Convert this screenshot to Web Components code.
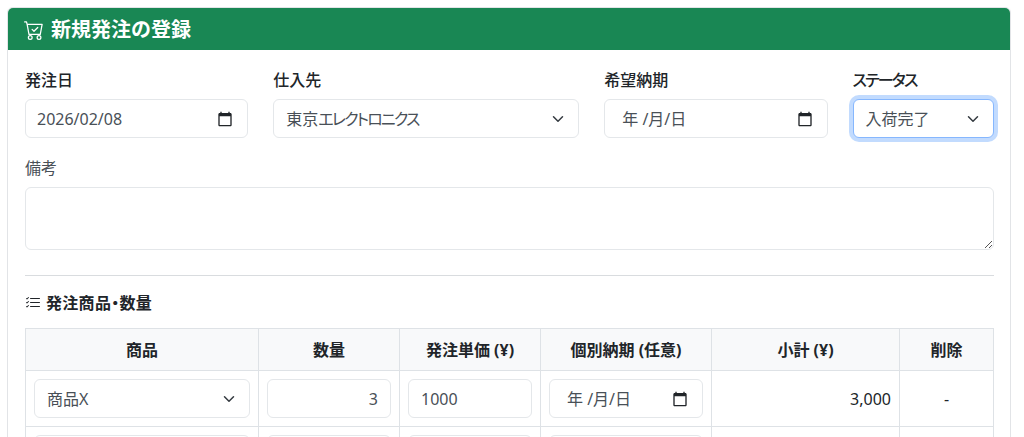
<!DOCTYPE html>
<html lang="ja">
<head>
<meta charset="utf-8">
<title>新規発注の登録</title>
<style>
	html, body { height: 100%; overflow: hidden; }
	body {
		margin: 7px 13px 0 7px;
		background: #fff;
		color: #212529;
		font: 16px/1.5 "Noto Sans", "Noto Sans CJK JP", sans-serif;
	}
</style>
</head>
<body>
<order-card heading="新規発注の登録">
	<form-row>
		<form-col span="3" label="発注日" strong><date-box value="2026/02/08"></date-box></form-col>
		<form-col span="4" label="仕入先" strong><select-box value="東京エレクトロニクス"></select-box></form-col>
		<form-col span="3" label="希望納期" strong><date-box></date-box></form-col>
		<form-col span="2" label="ステータス" strong last><select-box value="入荷完了" focused></select-box></form-col>
	</form-row>
	<form-col label="備考" class="note"><note-box></note-box></form-col>
	<section-rule></section-rule>
	<section-title>発注商品・数量</section-title>
	<order-table></order-table>
</order-card>

<script>
const calendarIcon = `<svg width="16" height="16" viewBox="0 0 24 24" fill="#212529"><path d="M20 3h-1V1h-2v2H7V1H5v2H4c-1.1 0-2 .9-2 2v16c0 1.1.9 2 2 2h16c1.1 0 2-.9 2-2V5c0-1.1-.9-2-2-2zm0 18H4V8h16v13z"/></svg>`;

// The reference sets katakana much narrower than the installed CJK font
const narrowKana = (text) =>
	text.replace(/[ァ-ヶー]+/g, (run) => `<span style="font-feature-settings:'palt';letter-spacing:-1.8px">${run}</span>`);

const boxStyles = `
	:host {
		display: flex;
		align-items: center;
		box-sizing: border-box;
		height: 39px;
		background: #fff;
		border: 1px solid #e4e7ea;
		border-radius: 6px;
		color: #495057;
		font-size: 16px;
		line-height: 24px;
		white-space: nowrap;
	}
`;

class OrderCard extends HTMLElement {
	connectedCallback() {
		const shadow = this.attachShadow({ mode: 'open' });
		shadow.innerHTML = `
      <style>
        :host {
          display: block;
          background: #fff;
          border: 1px solid #e2e4e7;
          border-radius: 6px;
          box-shadow: 0 2px 4px rgba(0, 0, 0, 0.075);
        }
        header {
          display: flex;
          align-items: center;
          gap: 7px;
          box-sizing: border-box;
          height: 42px;
          padding: 2px 16px 0;
          background: #198754;
          border-radius: 5px 5px 0 0;
          color: #fff;
          font-size: 20px;
          font-weight: 700;
        }
        svg { flex: none; }
        .body { padding: 18px 16px 16px 17px; }
      </style>
      <header>
        <svg width="20" height="20" viewBox="0 0 16 16" fill="#fff">
          <path d="M11.354 6.354a.5.5 0 0 0-.708-.708L8 8.293 6.854 7.146a.5.5 0 1 0-.708.708l1.5 1.5a.5.5 0 0 0 .708 0z"/>
          <path d="M.5 1a.5.5 0 0 0 0 1h1.11l.401 1.607 1.498 7.985A.5.5 0 0 0 4 12h1a2 2 0 1 0 0 4 2 2 0 0 0 0-4h7a2 2 0 1 0 0 4 2 2 0 0 0 0-4h1a.5.5 0 0 0 .491-.408l1.5-8A.5.5 0 0 0 14.5 3H2.89l-.405-1.621A.5.5 0 0 0 2 1zm3.915 10L3.102 4h10.796l-1.313 7zM6 14a1 1 0 1 1-2 0 1 1 0 0 1 2 0m7 0a1 1 0 1 1-2 0 1 1 0 0 1 2 0"/>
        </svg>
        <span>${this.getAttribute('heading')}</span>
      </header>
      <div class="body"><slot></slot></div>
    `;
	}
}

class FormRow extends HTMLElement {
	connectedCallback() {
		this.attachShadow({ mode: 'open' }).innerHTML = `
      <style>
        :host { display: flex; margin: 0 -12px; }
      </style>
      <slot></slot>
    `;
	}
}

class FormCol extends HTMLElement {
	connectedCallback() {
		const span = this.getAttribute('span');
		const basis = span ? (span / 12) * 100 + '%' : 'auto';
		const strong = this.hasAttribute('strong');
		const isNote = this.classList.contains('note');
		const paddingRight = this.hasAttribute('last') ? '12px' : '13px';
		this.attachShadow({ mode: 'open' }).innerHTML = `
      <style>
        :host {
          display: block;
          box-sizing: border-box;
          flex: 0 0 ${basis};
          padding: 0 ${span ? paddingRight : '0'} 0 ${span ? '12px' : '0'};
          margin-top: ${isNote ? '18px' : '0'};
        }
        label {
          display: block;
          margin-bottom: 7px;
          color: ${strong ? '#212529' : '#495057'};
          font-size: 16px;
          line-height: 24px;
          font-weight: ${strong ? 500 : 400};
        }
      </style>
      <label>${narrowKana(this.getAttribute('label'))}</label>
      <slot></slot>
    `;
	}
}

class DateBox extends HTMLElement {
	connectedCallback() {
		const value = this.getAttribute('value');
		const text = value
			? `<span>${value}</span>`
			: `<span class="parts">年&nbsp;/月/日</span>`;
		this.attachShadow({ mode: 'open' }).innerHTML = `
      <style>
        ${boxStyles}
        :host { padding: 0 14px 0 11px; justify-content: space-between; }
        .parts { padding-left: 6px; }
        svg { flex: none; }
      </style>
      ${this.hasAttribute('blank') ? '' : text + calendarIcon}
    `;
	}
}

class SelectBox extends HTMLElement {
	connectedCallback() {
		const value = this.getAttribute('value');
		const chevron = `<svg width="16" height="12" viewBox="0 0 16 16" fill="none" stroke="#343a40" stroke-width="2" stroke-linecap="round" stroke-linejoin="round"><path d="m2 5 6 6 6-6"/></svg>`;
		this.attachShadow({ mode: 'open' }).innerHTML = `
      <style>
        ${boxStyles}
        :host { padding: 0 12px 0 12px; justify-content: space-between; }
        :host([focused]) {
          border-color: #86b7fe;
          box-shadow: 0 0 0 4px rgba(13, 110, 253, 0.25);
        }
        svg { flex: none; }
      </style>
      ${value ? `<span>${narrowKana(value)}</span>${chevron}` : ''}
    `;
	}
}

class NumberBox extends HTMLElement {
	connectedCallback() {
		this.attachShadow({ mode: 'open' }).innerHTML = `
      <style>
        ${boxStyles}
        :host { padding: 0 12px; justify-content: ${this.hasAttribute('end') ? 'flex-end' : 'flex-start'}; }
      </style>
      <slot></slot>
    `;
	}
}

class NoteBox extends HTMLElement {
	connectedCallback() {
		this.attachShadow({ mode: 'open' }).innerHTML = `
      <style>
        :host {
          display: block;
          position: relative;
          box-sizing: border-box;
          height: 63px;
          border: 1px solid #e4e7ea;
          border-radius: 6px;
        }
        svg { position: absolute; right: 0; bottom: 0; }
      </style>
      <svg width="10" height="10" viewBox="0 0 10 10" stroke="#555" fill="none"><path d="M2 9 9 2M6 9l3-3"/></svg>
    `;
	}
}

class SectionRule extends HTMLElement {
	connectedCallback() {
		this.attachShadow({ mode: 'open' }).innerHTML = `
      <style>
        :host { display: block; margin: 25px 0 15px; border-top: 1px solid #d9dcdf; }
      </style>
    `;
	}
}

class SectionTitle extends HTMLElement {
	connectedCallback() {
		this.attachShadow({ mode: 'open' }).innerHTML = `
      <style>
        :host {
          display: flex;
          align-items: center;
          gap: 5px;
          height: 24px;
          margin-bottom: 13px;
          font-size: 16px;
          font-weight: 700;
          font-feature-settings: "palt";
          letter-spacing: 0.3px;
          color: #212529;
        }
      </style>
      <svg width="16" height="16" viewBox="0 0 16 16" fill="#212529">
        <path fill-rule="evenodd" d="M5 11.5a.5.5 0 0 1 .5-.5h9a.5.5 0 0 1 0 1h-9a.5.5 0 0 1-.5-.5m0-4a.5.5 0 0 1 .5-.5h9a.5.5 0 0 1 0 1h-9a.5.5 0 0 1-.5-.5m0-4a.5.5 0 0 1 .5-.5h9a.5.5 0 0 1 0 1h-9a.5.5 0 0 1-.5-.5M3.854 2.146a.5.5 0 0 1 0 .708l-1.5 1.5a.5.5 0 0 1-.708 0l-.5-.5a.5.5 0 1 1 .708-.708L2 3.293l1.146-1.147a.5.5 0 0 1 .708 0m0 4a.5.5 0 0 1 0 .708l-1.5 1.5a.5.5 0 0 1-.708 0l-.5-.5a.5.5 0 1 1 .708-.708L2 7.293l1.146-1.147a.5.5 0 0 1 .708 0m0 4a.5.5 0 0 1 0 .708l-1.5 1.5a.5.5 0 0 1-.708 0l-.5-.5a.5.5 0 0 1 .708-.708l.146.147 1.146-1.147a.5.5 0 0 1 .708 0"/>
      </svg>
      <span><slot></slot></span>
    `;
	}
}

class OrderTable extends HTMLElement {
	connectedCallback() {
		this.attachShadow({ mode: 'open' }).innerHTML = `
      <style>
        :host { display: block; }
        table {
          width: 968px;
          table-layout: fixed;
          border-collapse: collapse;
          font-size: 16px;
        }
        th, td { border: 1px solid #dee2e6; box-sizing: border-box; }
        th {
          height: 42px;
          padding: 0;
          background: #f8f9fa;
          color: #212529;
          font-weight: 700;
          text-align: center;
        }
        td { height: 56px; padding: 8px; color: #212529; }
        .end { text-align: right; }
        .mid { text-align: center; }
      </style>
      <table>
        <colgroup>
          <col style="width:233px"><col style="width:141px"><col style="width:141px">
          <col style="width:171px"><col style="width:188px"><col style="width:94px">
        </colgroup>
        <thead>
          <tr><th>商品</th><th>数量</th><th>発注単価 (¥)</th><th>個別納期 (任意)</th><th>小計 (¥)</th><th>削除</th></tr>
        </thead>
        <tbody>
          <tr>
            <td><select-box value="商品X"></select-box></td>
            <td><number-box end>3</number-box></td>
            <td><number-box>1000</number-box></td>
            <td><date-box></date-box></td>
            <td class="end">3,000</td>
            <td class="mid">-</td>
          </tr>
          <tr>
            <td><select-box></select-box></td>
            <td><number-box></number-box></td>
            <td><number-box></number-box></td>
            <td><date-box blank></date-box></td>
            <td></td>
            <td></td>
          </tr>
        </tbody>
      </table>
    `;
	}
}

customElements.define('order-card', OrderCard);
customElements.define('form-row', FormRow);
customElements.define('form-col', FormCol);
customElements.define('date-box', DateBox);
customElements.define('select-box', SelectBox);
customElements.define('number-box', NumberBox);
customElements.define('note-box', NoteBox);
customElements.define('section-rule', SectionRule);
customElements.define('section-title', SectionTitle);
customElements.define('order-table', OrderTable);
</script>
</body>
</html>
